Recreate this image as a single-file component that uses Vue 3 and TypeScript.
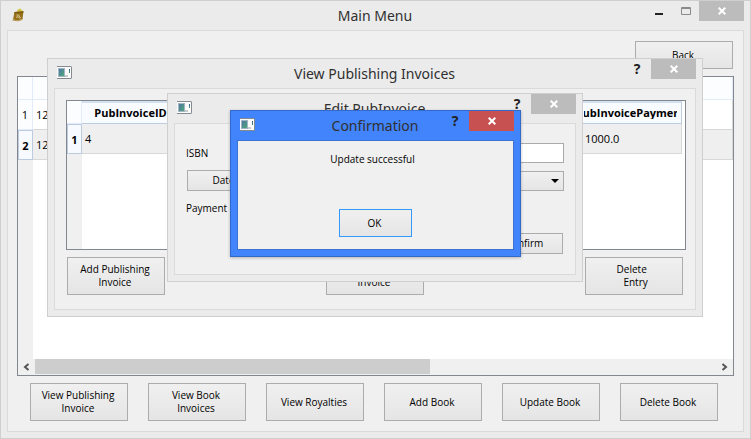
<script setup lang="ts">
import { ref } from 'vue'

const actions: string[] = [
  'View Publishing\nInvoice',
  'View Book\nInvoices',
  'View Royalties',
  'Add Book',
  'Update Book',
  'Delete Book',
]
const books = [
  { row: 1, isbn: '12', selected: false },
  { row: 2, isbn: '12', selected: true },
]
const invoiceHeaders: string[] = ['PubInvoiceID', '', '', '', '', 'PubInvoicePayment']
const invoice: string[] = ['4', '', '', '', '', '1000.0']
const thumb = ref(58)
const isbn = ref('')
</script>

<template>
  <div class="desktop">
    <svg class="defs" width="0" height="0" aria-hidden="true">
      <defs>
        <linearGradient id="pane" x1="0" y1="0" x2="1" y2="1">
          <stop offset="0" stop-color="#4f78a4" />
          <stop offset="1" stop-color="#4fa878" />
        </linearGradient>
        <symbol id="window-icon" viewBox="0 0 15 13">
          <path d="M0 0h14l1 1v11l-1 1H0z" fill="#868b90" />
          <path d="M0 1h14v11H0z" fill="#fcfcfc" />
          <path d="M1 2h7v9H1z" fill="#a3b4c6" />
          <path d="M2 3h5v7H2z" fill="url(#pane)" />
          <path d="M12 3h1v2h-1z" fill="#3d5fa0" />
          <path d="M12 5h1v2h-1z" fill="#3f8f74" />
          <path d="M8 9h3v2H8z" fill="#c8cccc" />
        </symbol>
      </defs>
    </svg>

    <main class="window main-window">
      <header class="titlebar">
        <svg class="app-icon book-icon" viewBox="0 0 13 14" aria-hidden="true">
          <path d="M5 2 8 .5l3 2.500L6 4z" fill="#cfc83e" />
          <path d="M2.500 4 11.500 3.200 10.500 11 6 12.500 1 11.500z" fill="#96701a" />
          <path d="M2.500 4 11.500 3.200 11.200 5 2.300 5.500z" fill="#7d5a10" />
          <path d="M4.500 7l2 0 2 3M4 9.500l2-1 1.500 2" stroke="#d8c596" fill="none" />
          <path d="M.5 12.200 6 12.800 10.500 11.500" stroke="#b89a58" fill="none" />
        </svg>
        <h1>Main Menu</h1>
        <div class="controls">
          <button class="ctl" aria-label="Minimize">
            <svg width="10" height="10" viewBox="0 0 10 10"><path d="M1 7h8v2H1z" fill="#222" /></svg>
          </button>
          <button class="ctl" aria-label="Maximize">
            <svg width="10" height="10" viewBox="0 0 10 10"><path d="M.5 1.500h9v7h-9zM0 2.500h10" fill="none" stroke="#8a8a8a" /></svg>
          </button>
          <button class="close" aria-label="Close">
            <svg width="8" height="8" viewBox="0 0 8 8"><path d="M.7.7l6.600 6.600M7.300.7L.7 7.300" /></svg>
          </button>
        </div>
      </header>
      <section class="frame main-frame">
        <button class="btn back">Back</button>
        <div class="table-box main-table">
          <table class="grid">
            <colgroup><col class="rowhead-col" /><col /></colgroup>
            <thead>
              <tr><th></th><th></th></tr>
            </thead>
            <tbody>
              <tr v-for="b in books" :key="b.row" :class="{ selected: b.selected }">
                <th scope="row">{{ b.row }}</th>
                <td>{{ b.isbn }}</td>
              </tr>
            </tbody>
          </table>
          <div class="gutter"></div>
          <div class="scrollbar">
            <button aria-label="Scroll left">
              <svg width="7" height="8" viewBox="0 0 7 8"><path d="M5.500 1L2 4l3.500 3" /></svg>
            </button>
            <div class="track"><div class="thumb" :style="{ width: thumb + '%' }"></div></div>
            <button aria-label="Scroll right">
              <svg width="7" height="8" viewBox="0 0 7 8"><path d="M1.500 1L5 4 1.500 7" /></svg>
            </button>
          </div>
        </div>
        <nav class="actions">
          <button v-for="a in actions" :key="a" class="btn tall">{{ a }}</button>
        </nav>
      </section>
    </main>

    <section class="window dialog view-dialog">
      <header class="titlebar">
        <svg class="app-icon" aria-hidden="true"><use href="#window-icon" /></svg>
        <h2>View Publishing Invoices</h2>
        <div class="controls">
          <button class="help" aria-label="Help">?</button>
          <button class="close" aria-label="Close">
            <svg width="8" height="8" viewBox="0 0 8 8"><path d="M.7.7l6.600 6.600M7.300.7L.7 7.300" /></svg>
          </button>
        </div>
      </header>
      <div class="frame view-frame">
        <div class="table-box invoice-table">
          <table class="grid">
            <colgroup><col class="rowhead-col" /><col v-for="n in 6" :key="n" /></colgroup>
            <thead>
              <tr>
                <th></th>
                <th v-for="(h, i) in invoiceHeaders" :key="i"><span class="clip">{{ h }}</span></th>
              </tr>
            </thead>
            <tbody>
              <tr class="selected">
                <th scope="row">1</th>
                <td v-for="(v, i) in invoice" :key="i">{{ v }}</td>
              </tr>
            </tbody>
          </table>
          <div class="gutter"></div>
        </div>
        <div class="view-actions">
          <button class="btn tall">Add Publishing<br />Invoice</button>
          <button class="btn tall">Edit Publishing<br />Invoice</button>
          <button class="btn tall">{{ 'Delete \n  Entry' }}</button>
        </div>
      </div>
    </section>

    <section class="window dialog edit-dialog">
      <header class="titlebar">
        <svg class="app-icon" aria-hidden="true"><use href="#window-icon" /></svg>
        <h2>Edit PubInvoice</h2>
        <div class="controls">
          <button class="help" aria-label="Help">?</button>
          <button class="close" aria-label="Close">
            <svg width="8" height="8" viewBox="0 0 8 8"><path d="M.7.7l6.600 6.600M7.300.7L.7 7.300" /></svg>
          </button>
        </div>
      </header>
      <form class="frame edit-frame" @submit.prevent>
        <label for="isbn">ISBN</label>
        <input id="isbn" v-model="isbn" type="text" />
        <button class="btn date" type="button">Date</button>
        <div class="combo">
          <select aria-label="Date"><option></option></select>
          <svg width="8" height="4" viewBox="0 0 8 4" aria-hidden="true"><path d="M0 0h8L4 4z" /></svg>
        </div>
        <span>Payment</span>
        <button class="btn confirm" type="submit">Confirm</button>
      </form>
    </section>

    <section class="window dialog confirm-dialog" role="alertdialog">
      <header class="titlebar">
        <svg class="app-icon" aria-hidden="true"><use href="#window-icon" /></svg>
        <h2>Confirmation</h2>
        <div class="controls">
          <button class="help" aria-label="Help">?</button>
          <button class="close" aria-label="Close">
            <svg width="8" height="8" viewBox="0 0 8 8"><path d="M.7.7l6.600 6.600M7.300.7L.7 7.300" /></svg>
          </button>
        </div>
      </header>
      <div class="frame confirm-frame">
        <p>Update successful</p>
        <button class="btn ok">OK</button>
      </div>
    </section>
  </div>
</template>

<style>
body {
  margin: 0;
}
</style>

<style scoped>
* {
  box-sizing: border-box;
}
.desktop {
  position: relative;
  display: flex;
  min-height: 100vh;
  font-family: 'Open Sans', 'Noto Sans', sans-serif;
  font-size: 11px;
  line-height: 13px;
  color: #000;
}
.defs {
  position: absolute;
}
.window {
  display: flex;
  flex-direction: column;
  padding: 0 6px 6px;
  border: 1px solid #cfcfcf;
  background: #ebebeb;
}
.main-window {
  flex: 1;
}
.dialog {
  position: absolute;
}
.view-dialog {
  left: 47px;
  top: 58px;
  width: 656px;
}
.edit-dialog {
  left: 167px;
  top: 93px;
  width: 416px;
}
.confirm-dialog {
  left: 230px;
  top: 110px;
  width: 291px;
  border-color: #3269cb;
  background: #4284fb;
  box-shadow: 0 1px 3px rgba(0, 0, 0, 0.25);
}
.titlebar {
  display: grid;
  grid-template-columns: 1fr auto 1fr;
  align-items: start;
  height: 29px;
}
.app-icon {
  width: 15px;
  height: 13px;
  margin: 7px 3px;
}
.book-icon {
  width: 13px;
  height: 14px;
  margin-left: 5px;
}
h1,
h2 {
  margin: 0;
  padding: 4px 1px 0 0;
  font-family: 'Noto Sans', sans-serif;
  font-size: 14px;
  font-weight: 400;
  line-height: 22px;
  color: #303030;
}
.controls {
  display: flex;
  justify-content: flex-end;
}
.controls button {
  display: flex;
  align-items: center;
  justify-content: center;
  height: 20px;
  padding: 0;
  border: 0;
  background: none;
}
.controls .ctl {
  width: 27px;
}
.controls .help {
  width: 28px;
  font: 700 14px/20px 'Noto Sans', sans-serif;
  color: #222;
}
.controls .close {
  width: 45px;
  background: #bcbcbc;
}
.confirm-dialog .close {
  background: #c75050;
}
.close path {
  fill: none;
  stroke: #fff;
  stroke-width: 2;
}
.frame {
  flex: 1;
  border: 1px solid #dadada;
  background: #f0f0f0;
}
.confirm-frame {
  border-color: #3c72d0;
}
.btn {
  height: 21px;
  padding: 0 2px 0 0;
  border: 1px solid #acacac;
  background: linear-gradient(#f0f0f0, #e5e5e5);
  font: inherit;
  font-size: 10px;
  color: #000;
  white-space: pre;
}
.tall {
  width: 98px;
  height: 38px;
}
.main-frame {
  display: flex;
  flex-direction: column;
  padding: 10px 9px;
}
.back {
  align-self: flex-end;
  width: 98px;
  height: 28px;
  margin-right: 1px;
}
.table-box {
  display: flex;
  flex-direction: column;
  border: 1px solid #828790;
  background: #fff;
}
.main-table {
  flex: 1;
  margin: 7px 0;
}
.gutter {
  flex: 1;
  width: 15px;
  background: #f0f0f0;
}
.grid {
  width: 100%;
  table-layout: fixed;
  border-collapse: separate;
  border-spacing: 0;
}
.rowhead-col {
  width: 15px;
}
.grid th,
.grid td {
  height: 30px;
  padding: 0 3px;
  border: 0 solid #d8d8d8;
  border-width: 0 1px 1px 0;
  text-align: left;
  overflow: hidden;
}
.grid th {
  padding: 0;
  border-color: #e2ecf8;
  background: #fcfdff;
  font-weight: 400;
  text-align: center;
}
.grid thead th {
  height: 23px;
}
.grid .selected td {
  background: #efefef;
}
.grid .selected th {
  border: 1px solid #bccbe0;
  background: #f7fbff;
  font-weight: 700;
}
.invoice-table {
  height: 150px;
}
.invoice-table .grid {
  width: 615px;
}
.invoice-table thead th + th {
  border-color: #bccbe0;
  border-top: 2px solid #d3e0f0;
  background: #f8fbff;
  font-weight: 700;
}
.clip {
  display: flex;
  justify-content: center;
  margin: 0 4px 2px 2px;
  overflow: hidden;
}
.scrollbar {
  display: flex;
  height: 16px;
  background: #f0f0f0;
}
.scrollbar button {
  display: flex;
  align-items: center;
  justify-content: center;
  width: 17px;
  padding: 0;
  border: 0;
  background: none;
}
.scrollbar path {
  fill: none;
  stroke: #555;
  stroke-width: 2;
}
.track {
  flex: 1;
}
.thumb {
  height: 15px;
  background: #cdcdcd;
}
.actions {
  display: flex;
  gap: 20px;
  padding: 0 16px 0 13px;
}
.actions .btn {
  flex: 1;
}
.view-frame {
  padding: 11px 9px 14px 11px;
}
.view-actions {
  display: flex;
  justify-content: space-between;
  padding: 7px 3px 0 1px;
}
.edit-frame {
  display: grid;
  grid-template-columns: 76px 1fr;
  gap: 7px 8px;
  align-items: center;
  padding: 19px 11px 20px 11px;
  font-size: 10px;
}
.edit-frame input {
  width: 100%;
  height: 20px;
  border: 1px solid #ababab;
  background: #fff;
}
.date {
  margin-left: 1px;
}
.combo {
  display: flex;
  align-items: center;
  position: relative;
}
.combo select {
  width: 100%;
  height: 20px;
  border: 1px solid #acacac;
  border-radius: 0;
  background: linear-gradient(#f0f0f0, #e5e5e5);
  appearance: none;
}
.combo svg {
  position: absolute;
  right: 5px;
}
.edit-frame span {
  grid-column: 1 / -1;
  padding: 4px 0 11px;
}
.confirm {
  grid-column: 2;
  justify-self: end;
  width: 75px;
  margin-right: 1px;
}
.confirm-frame {
  display: flex;
  flex-direction: column;
  align-items: center;
  padding: 12px 10px;
}
.confirm-frame p {
  margin: 0 0 43px;
  padding-right: 6px;
  font-size: 10px;
}
.ok {
  width: 73px;
  height: 28px;
  border-color: #3399ff;
}
</style>
